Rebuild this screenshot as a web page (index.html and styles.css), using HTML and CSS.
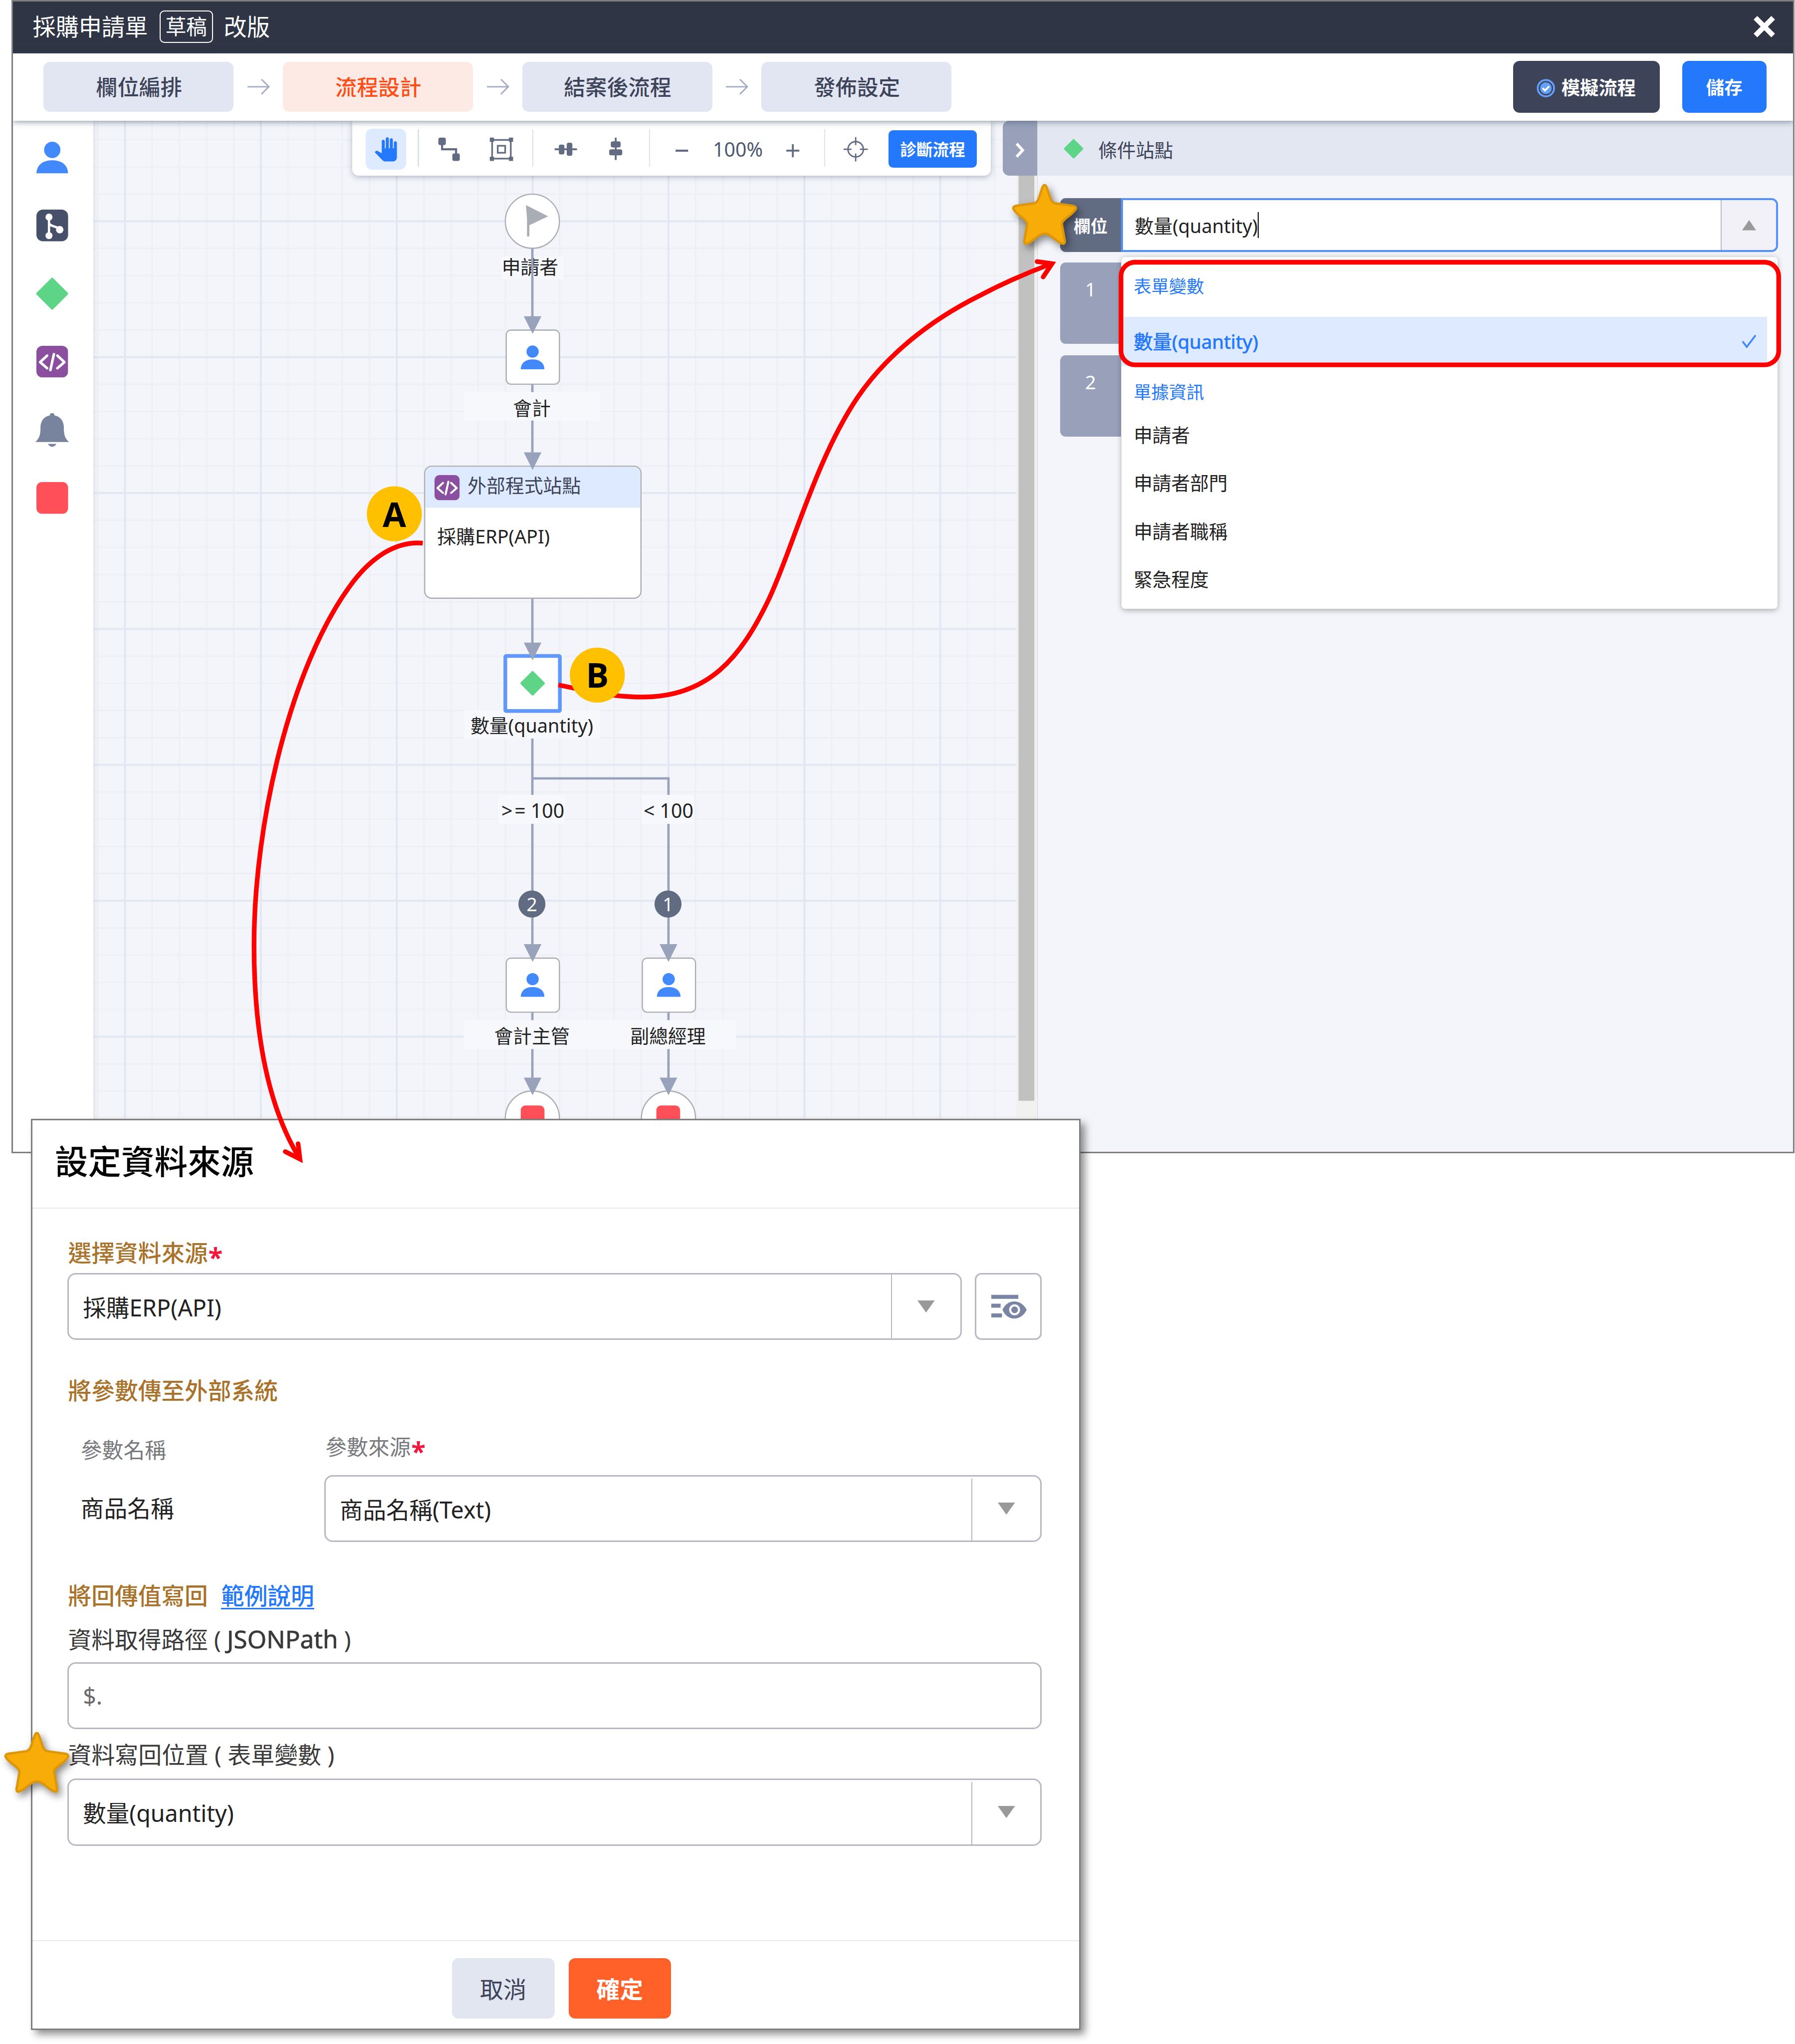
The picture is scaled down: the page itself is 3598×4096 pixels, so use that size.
FILE: index.html
```html
<!DOCTYPE html>
<html lang="zh-Hant">
<head>
<meta charset="utf-8">
<title>採購申請單</title>
<link rel="stylesheet" href="styles.css">
</head>
<body>
<svg class="defs" aria-hidden="true">
  <symbol id="user" viewBox="0 0 68 68"><ellipse cx="34" cy="17.5" rx="17.5" ry="17.5"/><path d="M0 68C1 48 16 40 34 40s33 8 34 28z"/></symbol>
  <symbol id="code" viewBox="0 0 68 68"><rect width="68" height="68" rx="13" fill="#8a4f9e"/><path d="M23 21L8 35l15 13M45 21l15 14-15 13M37.500 18L30 52" fill="none" stroke="#fff" stroke-width="5.500" stroke-linecap="round" stroke-linejoin="round"/></symbol>
  <symbol id="diamond" viewBox="0 0 74 74"><rect x="12" y="12" width="50" height="50" rx="3" transform="rotate(45 37 37)" fill="#5dd486"/></symbol>
  <symbol id="star" viewBox="0 0 148 140"><path d="M70 5C74 5 76 14 80 26Q84 42 92 44Q105 46 128 49Q139 50 137 56Q134 62 124 70Q108 81 107 88Q110 104 113 122Q115 130 110 131Q103 130 90 119Q78 109 70 109Q62 109 50 119Q37 130 30 131Q25 130 27 122Q30 104 33 88Q32 81 16 70Q6 62 3 56Q1 50 12 49Q35 46 48 44Q56 42 60 26C64 14 66 5 70 5z"/></symbol>
  <symbol id="step-arrow" viewBox="0 0 48 36"><path d="M0 18h45M30 2l16 16-16 16" fill="none" stroke="#a3abc0" stroke-width="3"/></symbol>
</svg>

<main class="window">
  <div class="titlebar">
    <span>採購申請單</span><span class="draft">草稿</span><span>改版</span>
    <svg class="close" viewBox="0 0 48 48"><path d="M5 5l38 38M43 5L5 43" stroke="#fff" stroke-width="11"/></svg>
  </div>
  <header class="steps">
    <div class="step">欄位編排</div><svg class="arrow"><use href="#step-arrow"/></svg>
    <div class="step active">流程設計</div><svg class="arrow"><use href="#step-arrow"/></svg>
    <div class="step">結案後流程</div><svg class="arrow"><use href="#step-arrow"/></svg>
    <div class="step">發佈設定</div>
    <button class="simulate"><svg viewBox="0 0 40 40"><circle cx="20" cy="20" r="17.500" fill="none" stroke="#65a0fc" stroke-width="4"/><circle cx="20" cy="20" r="12.500" fill="#65a0fc"/><path d="M13 20l5 5 9-9" fill="none" stroke="#fff" stroke-width="4"/></svg>模擬流程</button>
    <button class="save">儲存</button>
  </header>
  <div class="work">
    <nav class="palette">
      <svg class="tool-user"><use href="#user"/></svg>
      <svg viewBox="0 0 68 68"><rect width="68" height="68" rx="14" fill="#465068"/><path d="M27 15v41M27 28c0 9 22 8 23 15" fill="none" stroke="#fff" stroke-width="5"/><circle cx="27" cy="16" r="7.500" fill="#fff"/><circle cx="27" cy="56" r="7.500" fill="#fff"/><circle cx="50" cy="43" r="8" fill="#fff"/></svg>
      <svg class="wide"><use href="#diamond"/></svg>
      <svg><use href="#code"/></svg>
      <svg class="wide" viewBox="0 0 74 74"><path d="M37 1c4 0 5 2 5 5 12 2 19 11 20 23 0 16 1 25 11 34H1c10-9 11-18 11-34C13 17 20 8 32 6c0-3 1-5 5-5zM28 67h18c-2 4-5 6-9 6s-7-2-9-6z" fill="#78839d"/></svg>
      <svg viewBox="0 0 68 68"><rect width="68" height="68" rx="12" fill="#ff4f59"/></svg>
    </nav>
    <section class="canvas">
      <svg class="flow" viewBox="200 259 2025 2212">
        <defs>
          <pattern id="grid" x="268" y="474.500" width="291.500" height="291.500" patternUnits="userSpaceOnUse">
            <path d="M58.300 0v291.500M116.600 0v291.500M174.900 0v291.500M233.200 0v291.500M0 58.300h291.500M0 116.600h291.500M0 174.900h291.500M0 233.200h291.500" stroke="#edeff5" stroke-width="3" fill="none"/>
            <path d="M0 0h291.500M0 0v291.500M291.500 0v291.500M0 291.500h291.500" stroke="#e2e6f1" stroke-width="4" fill="none"/>
          </pattern>
          <symbol id="head" viewBox="0 0 38 38"><path d="M0 0h38L19 38z" fill="#98a2ba"/></symbol>
        </defs>
        <rect x="200" y="259" width="1980" height="2212" fill="url(#grid)"/>
        <rect x="2180" y="259" width="45" height="2212" fill="#f1f1f1"/>
        <rect x="2185" y="259" width="34" height="2102" fill="#c1c1c1"/>
        <g class="label-bg">
          <rect x="1075" y="550" width="134" height="49"/>
        </g>
        <g class="labels"><text x="1137" y="588">申請者</text></g>
        <g class="edges">
          <path d="M1142 533v150M1142 825v150M1142 1284v98M1142 1528v500M1142 1669.500h292v360M1142 2171v142M1434 2171v142"/>
        </g>
        <g class="label-bg">
          <rect x="996" y="841" width="291" height="61"/>
          <rect x="996" y="1523" width="291" height="61"/>
          <rect x="1069" y="1705" width="143" height="62"/>
          <rect x="1376" y="1705" width="113" height="62"/>
          <rect x="995" y="2188" width="584" height="62"/>
        </g>
        <g class="nodes">
          <circle cx="1142" cy="474.500" r="58"/>
          <rect x="1086" y="708" width="114" height="116" rx="10"/>
          <rect x="911" y="1000" width="464" height="283" rx="15"/>
          <rect x="1086" y="2055" width="114" height="116" rx="10"/>
          <rect x="1378" y="2055" width="114" height="116" rx="10"/>
          <circle cx="1142" cy="2398" r="58"/>
          <circle cx="1434" cy="2398" r="58"/>
        </g>
        <path d="M913 1089v-72q0-15 15-15h430q15 0 15 15v72z" fill="#deeaff"/>
        <rect x="1084" y="1407" width="117" height="118" rx="2" fill="#fff" stroke="#6098fb" stroke-width="8"/>
        <path d="M1133 507v-60M1131 444l39 20-36 17z" fill="#a9adb6" stroke="#a9adb6" stroke-width="5"/>
        <g fill="#4289fb">
          <use href="#user" x="1117" y="740" width="51" height="53"/>
          <use href="#user" x="1117" y="2086" width="51" height="53"/>
          <use href="#user" x="1409" y="2086" width="51" height="53"/>
        </g>
        <use href="#code" x="932" y="1019" width="54" height="54"/>
        <use href="#diamond" x="1114" y="1437" width="57" height="57"/>
        <rect x="1117" y="2371" width="51" height="53" rx="10" fill="#ff4f59"/>
        <rect x="1408" y="2371" width="51" height="53" rx="10" fill="#ff4f59"/>
        <use href="#head" x="1123.500" y="678" width="38" height="38"/>
        <use href="#head" x="1123.500" y="970" width="38" height="38"/>
        <use href="#head" x="1123.500" y="1378" width="38" height="38"/>
        <use href="#head" x="1123.500" y="2025" width="38" height="38"/>
        <use href="#head" x="1415" y="2025" width="38" height="38"/>
        <use href="#head" x="1123.500" y="2311" width="38" height="38"/>
        <use href="#head" x="1415" y="2311" width="38" height="38"/>
        <circle cx="1141" cy="1939" r="29" fill="#616b82"/>
        <circle cx="1433" cy="1939" r="29" fill="#616b82"/>
        <g class="labels order"><text x="1141" y="1954">2</text><text x="1433" y="1954">1</text></g>
        <g class="labels">
          <text x="1141" y="890">會計</text>
          <text class="left title" x="1003" y="1056">外部程式站點</text>
          <text class="left" x="938" y="1166">採購ERP(API)</text>
          <text x="1141" y="1571">數量(quantity)</text>
          <text class="condition" x="1143" y="1754">&gt;<tspan dx="4">=</tspan> 100</text>
          <text class="condition" x="1434" y="1754">&lt; 100</text>
          <text x="1141" y="2237">會計主管</text>
          <text x="1433" y="2237">副總經理</text>
        </g>
      </svg>
      <div class="toolbar">
        <div class="hand"><svg viewBox="0 0 24 24"><path fill="#2378fb" d="M23 5.500V20c0 2.200-1.800 4-4 4h-7.300c-1.080 0-2.100-.43-2.850-1.190L1 14.830s1.260-1.230 1.300-1.250c.22-.19.49-.29.79-.29.22 0 .42.06.6.16.04.01 4.310 2.460 4.310 2.460V4c0-.83.67-1.500 1.500-1.500S11 3.170 11 4v7h1V1.500c0-.83.67-1.500 1.500-1.500S15 .67 15 1.500V11h1V2.500c0-.83.67-1.500 1.500-1.500s1.500.67 1.500 1.500V11h1V5.500c0-.83.67-1.500 1.500-1.500s1.500.67 1.500 1.500z"/></svg></div>
        <i class="sep"></i>
        <svg viewBox="0 0 56 56"><path d="M13 10v18h30v18" fill="none" stroke="#616b82" stroke-width="4.500"/><rect x="5" y="3" width="16" height="16" rx="4"/><rect x="35" y="37" width="16" height="16" rx="4"/></svg>
        <svg viewBox="0 0 56 56"><path d="M8 8h40v40H8zM20 20.500h16v15H20z" fill="none" stroke="#616b82" stroke-width="3.500"/><path d="M3 3h9v9H3zM44 3h9v9h-9zM3 44h9v9H3zM44 44h9v9h-9z"/></svg>
        <i class="sep"></i>
        <svg viewBox="0 0 56 56"><path d="M4 28h48" stroke="#616b82" stroke-width="4"/><rect x="13" y="18" width="12" height="21" rx="4"/><rect x="30" y="14" width="12" height="28" rx="4"/></svg>
        <svg viewBox="0 0 56 56"><path d="M28 3v48" stroke="#616b82" stroke-width="4"/><rect x="17.500" y="11" width="21" height="13" rx="4"/><rect x="14" y="28" width="28" height="13" rx="4"/></svg>
        <i class="sep"></i>
        <svg viewBox="0 0 56 56"><path d="M14 31h27" stroke="#616b82" stroke-width="4.500"/></svg>
        <span class="percent">100%</span>
        <svg viewBox="0 0 56 56"><path d="M14 31h28M28 17v28" stroke="#616b82" stroke-width="4"/></svg>
        <i class="sep"></i>
        <svg viewBox="0 0 56 56"><g fill="none" stroke="#616b82" stroke-width="3"><circle cx="28" cy="28" r="16.500"/><path d="M28 2v17M28 37v17M2 28h17M37 28h17"/></g></svg>
        <button class="diagnose">診斷流程</button>
      </div>
      <div class="collapse"><svg viewBox="0 0 20 30"><path d="M3 1l13 14L3 29" fill="none" stroke="#fff" stroke-width="6"/></svg></div>
    </section>
    <aside class="panel">
      <div class="panel-head"><svg><use href="#diamond"/></svg>條件站點</div>
      <div class="rules">
        <div class="field">
          <div class="field-label">欄位</div>
          <div class="field-input"><span>數量(quantity)</span><i class="caret"></i><div class="toggle"><svg viewBox="0 0 30 22"><path d="M15 0l15 22H0z" fill="#999"/></svg></div></div>
        </div>
        <div class="rule">1</div>
        <div class="rule">2</div>
        <div class="menu">
          <div class="group">表單變數</div>
          <div class="option selected">數量(quantity)<svg viewBox="0 0 32 30"><path d="M2 15l9 12L30 2" fill="none" stroke="#4289fb" stroke-width="4"/></svg></div>
          <div class="group second">單據資訊</div>
          <div class="option">申請者</div>
          <div class="option">申請者部門</div>
          <div class="option">申請者職稱</div>
          <div class="option">緊急程度</div>
        </div>
      </div>
    </aside>
  </div>
</main>

<section class="modal">
  <h1>設定資料來源</h1>
  <div class="modal-body">
    <div class="heading first">選擇資料來源<b class="req">*</b></div>
    <div class="source">
      <div class="select"><span>採購ERP(API)</span><div class="drop"><svg viewBox="0 0 37 26"><path d="M0 0h37L18.500 26z" fill="#999"/></svg></div></div>
      <div class="preview"><svg viewBox="0 0 76 52"><path d="M0 5h58M0 24h20M0 45h23" stroke="#7a85a3" stroke-width="8.500" fill="none"/><path d="M24 33c10-24 40-24 52 0-12 25-42 25-52 0z" fill="#7a85a3"/><circle cx="50" cy="33" r="9.500" fill="#7a85a3" stroke="#fff" stroke-width="4.500"/></svg></div>
    </div>
    <div class="heading params-title">將參數傳至外部系統</div>
    <div class="params">
      <div class="col-name">參數名稱</div><div class="col-source">參數來源<b class="req">*</b></div>
      <div class="name">商品名稱</div>
      <div class="select"><span>商品名稱(Text)</span><div class="drop inset"><svg viewBox="0 0 37 26"><path d="M0 0h37L18.500 26z" fill="#999"/></svg></div></div>
    </div>
    <div class="heading back">將回傳值寫回<a>範例說明</a></div>
    <div class="path-label">資料取得路徑 ( <span class="latin">JSONPath</span> )</div>
    <div class="select path"><span>$.</span></div>
    <div class="path-label target">資料寫回位置 ( 表單變數 )</div>
    <div class="select"><span>數量(quantity)</span><div class="drop inset"><svg viewBox="0 0 37 26"><path d="M0 0h37L18.500 26z" fill="#999"/></svg></div></div>
  </div>
  <footer><button class="cancel">取消</button><button class="confirm">確定</button></footer>
</section>

<svg class="notes" viewBox="0 0 3851 4384">
  <rect x="2405" y="562.500" width="1411" height="220" rx="30"/>
  <path d="M907 1165C850 1160 795 1195 750 1258C625 1430 545 1760 545 2028C545 2230 580 2380 641 2482"/>
  <path class="tip" d="M639.500 2453L643.500 2486L612 2470"/>
  <path d="M1198 1469C1260 1482 1310 1495 1378 1495C1520 1495 1590 1410 1650 1284C1700 1178 1750 985 1840 852C1900 765 1990 690 2100 635Q2170 598 2252 567"/>
  <path class="tip" d="M2225 561L2257 565.500L2238 594"/>
  <circle cx="846" cy="1102" r="59"/>
  <circle cx="1281.500" cy="1448" r="59"/>
  <text x="846" y="1130">A</text>
  <text x="1281.500" y="1475">B</text>
  <use href="#star" x="2171" y="392" width="148" height="140"/>
  <use href="#star" x="9" y="3712" width="148" height="140"/>
</svg>
</body>
</html>
```
FILE: styles.css
```css
/* The layout is drawn on a grid 38.51rem wide that fills the viewport */
html { font-size: calc(100vw / 38.51); }
* { box-sizing: border-box; }
body {
  margin: 0;
  width: 38.51rem;
  height: 43.84rem;
  overflow: hidden;
  position: relative;
  background: #fff;
  font-family: "Noto Sans", "Noto Sans CJK TC", sans-serif;
  color: #222;
}
svg { display: block; flex: none; overflow: visible; }
button { border: 0; padding: 0; font: inherit; color: #fff; display: flex; align-items: center; justify-content: center; border-radius: .14rem; }
.defs { position: absolute; width: 0; height: 0; }

.window {
  width: 38.25rem;
  height: 24.74rem;
  margin-left: .25rem;
  border: .035rem solid #7f7f7f;
  display: flex;
  flex-direction: column;
  overflow: hidden;
  isolation: isolate;
}
.titlebar {
  height: 1.115rem;
  flex: none;
  background: #2f3545;
  color: #fff;
  display: flex;
  align-items: center;
  padding: 0 .38rem .03rem .42rem;
  font-size: .494rem;
  line-height: 1;
}
.draft { font-size: .445rem; margin: 0 .23rem 0 .25rem; width: 1.15rem; height: .7rem; border: .03rem solid #fff; border-radius: .1rem; display: flex; align-items: center; justify-content: center; }
.close { width: .48rem; height: .48rem; margin-left: auto; }

.steps {
  height: 1.44rem;
  flex: none;
  display: flex;
  align-items: center;
  padding: 0 .57rem .01rem .65rem;
  background: #fff;
  box-shadow: 0 .03rem .12rem rgba(70, 85, 110, .55);
  position: relative;
  z-index: 3;
}
.step { width: 4.08rem; height: 1.07rem; border-radius: .14rem; background: #e2e6f2; color: #3d4459; font-size: .462rem; display: flex; align-items: center; justify-content: center; font-weight: 500; padding: 0 0 .03rem .02rem; }
.step.active { background: #feeae4; color: #ff4d17; }
.arrow { width: .48rem; height: .36rem; margin: 0 .28rem 0 .295rem; }
.simulate { margin-left: auto; width: 3.15rem; height: 1.11rem; background: #3d4459; font-size: .4rem; font-weight: 700; }
.simulate svg { width: .4rem; height: .4rem; margin: .06rem .13rem 0 0; }
.save { margin-left: .48rem; width: 1.81rem; height: 1.11rem; background: #2378fb; font-size: .39rem; font-weight: 700; }

.work { flex: 1; display: flex; min-height: 0; }
.palette {
  width: 1.72rem;
  flex: none;
  display: flex;
  flex-direction: column;
  align-items: center;
  gap: .78rem;
  padding: .45rem .04rem 0 0;
  background: #fff;
  box-shadow: .02rem 0 .1rem rgba(60, 70, 100, .15);
  z-index: 1;
}
.palette svg { width: .68rem; height: .68rem; }
.palette svg.wide { width: .74rem; height: .74rem; margin: -.03rem 0; }
.tool-user { fill: #4289fb; }

.canvas { width: 20.25rem; flex: none; position: relative; background: #f4f5fa; }
.flow { width: 20.25rem; height: 22.12rem; }
.edges path { fill: none; stroke: #98a2ba; stroke-width: 5; }
.label-bg rect { fill: #f7f8fc; }
.nodes circle, .nodes rect { fill: #fff; stroke: #a9acb3; stroke-width: 2.5; }
.labels text { font-size: 40.5px; text-anchor: middle; fill: #222; }
.labels .left { text-anchor: start; }
.labels .title { fill: #3d4459; }
.labels .condition { font-size: 42px; }
.labels.order text { font-size: 40px; fill: #fff; }

.toolbar {
  position: absolute;
  left: 5.55rem;
  top: 0;
  width: 13.71rem;
  height: 1.18rem;
  padding-left: .29rem;
  display: grid;
  grid-template-columns: 1.12rem .39rem 1.13rem .94rem .44rem 1.07rem .99rem .43rem .88rem 1.5rem .95rem .4rem .98rem 1.9rem;
  align-items: center;
  background: #fff;
  border-radius: 0 0 .14rem .14rem;
  box-shadow: 0 .03rem .12rem rgba(60, 70, 100, .35);
}
.toolbar > svg { width: .56rem; height: .56rem; fill: #616b82; margin-top: .04rem; }
.hand { width: .87rem; height: .88rem; border-radius: .14rem; background: #deeaff; display: flex; align-items: center; justify-content: center; margin-top: .05rem; }
.hand svg { width: .52rem; height: .52rem; }
.sep { width: .025rem; height: .8rem; background: #dde2ee; }
.percent { width: 1.2rem; text-align: center; font-size: .42rem; line-height: 1; color: #4e586e; margin-top: .04rem; }
.diagnose { width: 1.9rem; height: .8rem; background: #2378fb; border-radius: .1rem; font-size: .35rem; font-weight: 700; margin-top: .03rem; }
.collapse { position: absolute; right: 0; top: 0; width: .74rem; height: 1.18rem; border-radius: .14rem 0 0 .14rem; background: #98a1b9; display: flex; align-items: center; justify-content: center; padding: .1rem 0 0 0; }
.collapse svg { width: .2rem; height: .3rem; }

.panel { flex: 1; background: #f4f5fa; border-left: .02rem solid #d5d8e0; }
.panel-head { height: 1.18rem; background: #e3e7f1; display: flex; align-items: center; gap: .3rem; padding: .03rem 0 0 .55rem; font-size: .402rem; color: #3d4459; }
.panel-head svg { width: .45rem; height: .45rem; }
.rules { position: relative; padding: .48rem .32rem 0 .48rem; }
.field { display: flex; height: 1.16rem; margin-bottom: .22rem; }
.field-label { width: 1.31rem; flex: none; border-radius: .12rem 0 0 .12rem; background: #616b82; color: #fff; font-size: .365rem; font-weight: 700; display: flex; align-items: center; justify-content: center; }
.field-input { flex: 1; display: flex; align-items: center; border: .05rem solid #5591fb; border-radius: 0 .14rem .14rem 0; background: #fff; padding-left: .25rem; font-size: .406rem; overflow: hidden; }
.caret { width: .025rem; height: .55rem; background: #000; }
.toggle { margin-left: auto; width: 1.19rem; height: 100%; border-left: .025rem solid #b8bbc5; background: #f1f1f7; display: flex; align-items: center; justify-content: center; }
.toggle svg { width: .3rem; height: .22rem; }
.rule { width: 1.31rem; height: 1.75rem; margin-bottom: .24rem; border-radius: .12rem 0 0 .12rem; background: #98a1b9; color: #fff; font-size: .41rem; line-height: 1.14rem; text-align: center; }
.menu { position: absolute; left: 1.8rem; top: 1.745rem; width: 14.07rem; height: 7.55rem; background: #fff; border-radius: .08rem; box-shadow: 0 .03rem .12rem rgba(0, 0, 0, .3); font-size: .403rem; }
.group { height: 1.28rem; line-height: 1.25rem; padding-left: .26rem; font-size: .378rem; color: #2378fb; }
.option { height: 1.03rem; line-height: 1.04rem; padding-left: .26rem; }
.option.selected { height: 1.05rem; line-height: 1.05rem; width: 13.85rem; background: #deeaff; color: #2378fb; font-size: .411rem; -webkit-text-stroke: .008rem #2378fb; display: flex; align-items: center; justify-content: space-between; padding-right: .23rem; }
.selected svg { width: .32rem; height: .3rem; }
.group.second { height: .97rem; line-height: 1.13rem; }

.modal {
  position: absolute;
  left: .665rem;
  top: 24rem;
  width: 22.515rem;
  height: 19.54rem;
  border: .035rem solid #7f7f7f;
  background: #fff;
  box-shadow: .1rem .1rem .16rem rgba(0, 0, 0, .45);
  display: flex;
  flex-direction: column;
}
h1 { margin: 0; height: 1.895rem; line-height: 1.77rem; border-bottom: .03rem solid #e5e9f1; padding-left: .48rem; font-size: .712rem; font-weight: 500; color: #000; }
.modal-body { flex: 1; padding: 0 .8rem 0 .745rem; font-size: .5rem; }
.heading { height: .86rem; line-height: .84rem; color: #a9732b; font-weight: 500; padding-left: .02rem; }
.heading.first { margin-top: .52rem; }
.req { margin-left: .01rem; font-size: .56rem; color: #f5153b; font-weight: 700; line-height: 0; vertical-align: -.12rem; }
.source { display: flex; gap: .28rem; }
.source .select { flex: 1; }
.select { height: 1.435rem; border: .035rem solid #b6b9c4; border-radius: .18rem; display: flex; align-items: center; padding-left: .305rem; font-size: .498rem; }
.drop { margin-left: auto; width: 1.48rem; height: 100%; border-left: .03rem solid #b6b9c4; display: flex; align-items: center; justify-content: center; }
.drop.inset { height: calc(100% - .04rem); align-self: flex-end; padding-bottom: .04rem; }
.drop svg { width: .37rem; height: .26rem; }
.preview { width: 1.435rem; height: 1.435rem; border: .035rem solid #b6b9c4; border-radius: .14rem; display: flex; align-items: center; justify-content: center; padding-left: .04rem; }
.preview svg { width: .76rem; height: .52rem; }
.params-title { margin-top: .66rem; }
.params { display: grid; grid-template-columns: 5.51rem 1fr; }
.col-name, .col-source { height: 1.38rem; line-height: 1.56rem; font-size: .458rem; color: #77797d; padding-left: .03rem; }
.col-name { padding: .06rem 0 0 .29rem; }
.name { padding-left: .29rem; line-height: 1.415rem; }
.heading.back { margin-top: .73rem; line-height: .82rem; }
.heading a { margin-left: .28rem; color: #2378fb; text-decoration: underline; text-underline-offset: .08rem; text-decoration-thickness: .03rem; }
.path-label { height: .99rem; line-height: .96rem; color: #3a3a3a; padding-left: .02rem; }
.path-label .latin { font-size: .528rem; -webkit-text-stroke: .008rem #3a3a3a; }
.path-label.target { height: 1.06rem; line-height: 1.1rem; font-size: .502rem; }
.path { color: #6b6b6b; }
footer { height: 1.89rem; flex: none; border-top: .03rem solid #e5e9f1; display: flex; gap: .3rem; padding: .36rem 0 0 9rem; font-size: .5rem; }
footer button { width: 2.2rem; height: 1.3rem; padding-bottom: .02rem; }
.cancel { background: #e2e6f0; color: #3d4459; }
.confirm { background: #ff6128; font-weight: 700; }

.notes { position: absolute; left: 0; top: 0; width: 38.51rem; height: 43.84rem; }
.notes rect, .notes path { fill: none; stroke: #f00; stroke-width: 10; }
.notes .tip { stroke-linecap: round; }
.notes circle { fill: #ffc000; }
.notes text { font: 700 73px "Open Sans", sans-serif; text-anchor: middle; fill: #000; }
.notes use { filter: drop-shadow(6px 8px 8px rgba(0, 0, 0, .45)); }
#star path { fill: #f8ac08; stroke: #dc960a; stroke-width: 5; }
```
